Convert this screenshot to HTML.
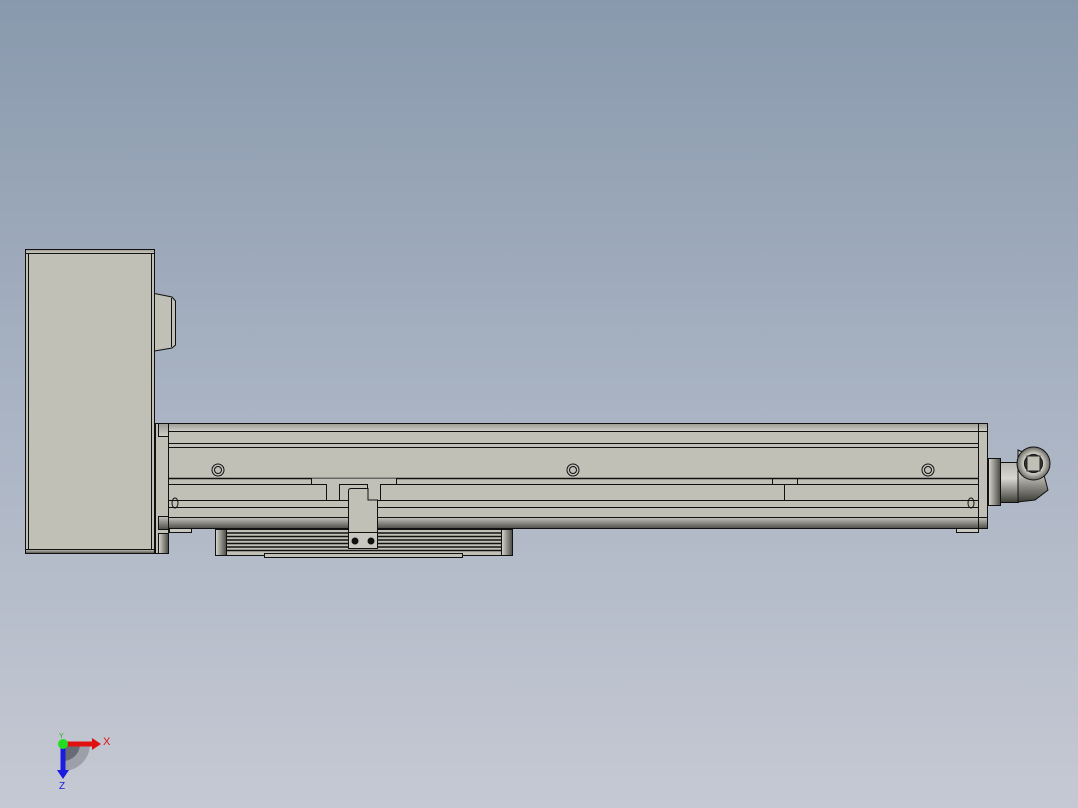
<!DOCTYPE html>
<html><head><style>
html,body{margin:0;padding:0;width:1078px;height:808px;overflow:hidden}
body{background:linear-gradient(#8999ad,#a9b3c3 50%,#c5c9d3);font-family:"Liberation Sans",sans-serif}
svg{position:absolute;left:0;top:0}
</style></head><body>
<svg width="1078" height="808" viewBox="0 0 1078 808">
<defs>
<linearGradient id="sh" x1="0" y1="0" x2="0" y2="1"><stop offset="0" stop-color="#c4c4bc"/><stop offset="1" stop-color="#4e4e48"/></linearGradient>
<linearGradient id="sh2" x1="0" y1="0" x2="0" y2="1"><stop offset="0" stop-color="#9a9a92"/><stop offset="1" stop-color="#d0d0c8"/></linearGradient>
<linearGradient id="hx" x1="0" y1="0" x2="1" y2="0"><stop offset="0" stop-color="#d8d8d0"/><stop offset="1" stop-color="#4a4a44"/></linearGradient>
<linearGradient id="el" x1="0" y1="0" x2="0" y2="1"><stop offset="0" stop-color="#b8b8b0"/><stop offset="0.4" stop-color="#d8d8d0"/><stop offset="1" stop-color="#3e3e38"/></linearGradient>
<radialGradient id="fit"><stop offset="0.5" stop-color="#3a3a36"/><stop offset="0.6" stop-color="#d0d0c8"/><stop offset="1" stop-color="#6a6a64"/></radialGradient>
</defs>
<g stroke="#111" stroke-width="1" fill="#c0c0b7">
<!-- motor -->
<rect x="25.5" y="249.5" width="129" height="304"/>
<rect x="25.5" y="249.5" width="129" height="4" fill="url(#sh2)"/>
<rect x="25.5" y="549.5" width="129" height="4" fill="url(#sh)"/>
<line x1="28.5" y1="253" x2="28.5" y2="549"/>
<line x1="151.5" y1="253" x2="151.5" y2="549"/>
<path d="M154.5 293.5 L172 297 L175.5 301 L175.5 345 L172 348 L154.5 351 Z"/>
<line x1="171.5" y1="298" x2="171.5" y2="347"/>
<!-- flange -->
<rect x="155.5" y="423.5" width="13" height="130" fill="#c0c0b7"/>
<rect x="158.5" y="423.5" width="10" height="13" fill="url(#sh2)"/>
<rect x="158.5" y="516.5" width="10" height="13" fill="url(#sh)"/>
<rect x="158.5" y="533.5" width="10" height="20" fill="url(#hx)"/>
<!-- body -->
<rect x="168.5" y="423.5" width="810" height="105"/>
<rect x="168.5" y="423.5" width="810" height="8" fill="url(#sh2)"/>
<rect x="168.5" y="517.5" width="810" height="11" fill="url(#sh)"/>
<line x1="168" y1="443.5" x2="978" y2="443.5"/>
<line x1="168" y1="447.5" x2="978" y2="447.5"/>
<line x1="168" y1="478.5" x2="978" y2="478.5" stroke-width="1.5"/>
<line x1="168" y1="484.5" x2="978" y2="484.5"/>
<line x1="168" y1="500.5" x2="978" y2="500.5"/>
<line x1="168" y1="507.5" x2="978" y2="507.5"/>
<!-- T slots -->
<path d="M311.5 478.5 V484.5 H326.5 V500.5 H339.5 V484.5 H367.5 V500.5 H380.5 V484.5 H396.5 V478.5" fill="#c0c0b7"/>
<path d="M772.5 478.5 V484.5 H784.5 V500.5 M797.5 484.5 V478.5" fill="none"/>
<line x1="784" y1="484.5" x2="797" y2="484.5"/>
<!-- end cap -->
<rect x="978.5" y="423.5" width="9" height="105" fill="#c0c0b7"/>
<rect x="978.5" y="423.5" width="9" height="8" fill="url(#sh2)"/>
<rect x="978.5" y="517.5" width="9" height="11" fill="url(#sh)"/>
<rect x="956.5" y="528.5" width="22" height="4" fill="#c8c8c0"/>
<rect x="169.5" y="528.5" width="22" height="4" fill="#c8c8c0"/>
<!-- fitting -->
<rect x="988.5" y="458.5" width="12" height="47" fill="url(#hx)"/>
<rect x="1000.5" y="462.5" width="18" height="40" fill="url(#el)"/>
<path d="M1018 450 L1040 460 L1048 490 L1035 500 L1018 502 Z" fill="url(#el)"/>
<circle cx="1033.5" cy="463.5" r="16.5" fill="url(#fit)"/>
<circle cx="1033.5" cy="463.5" r="9" fill="#3a3a36"/>
<rect x="1027" y="456" width="13" height="15" fill="#c0c0b7" stroke="#222"/>
<!-- scale strip -->
<rect x="215.5" y="529.5" width="297" height="26" fill="#c0c0b7"/>
<rect x="264.5" y="553.5" width="198" height="4" fill="#c0c0b7"/>
<rect x="215.5" y="529.5" width="11" height="26" fill="url(#hx)"/>
<rect x="501.5" y="529.5" width="11" height="26" fill="url(#hx)"/>
<g stroke="#111" stroke-width="1.6">
<line x1="226" y1="533" x2="502" y2="533"/><line x1="226" y1="536.5" x2="502" y2="536.5"/>
<line x1="226" y1="540" x2="502" y2="540"/><line x1="226" y1="543.5" x2="502" y2="543.5"/>
<line x1="226" y1="547" x2="502" y2="547"/><line x1="226" y1="550.5" x2="502" y2="550.5"/>
</g>
<!-- carriage tab -->
<path d="M348.5 548.5 V491 Q348.5 488.5 351 488.5 H368 V500 H377.5 V548.5 Z" fill="#c0c0b7"/>
<line x1="348" y1="532.5" x2="378" y2="532.5"/>
<rect x="349" y="533" width="28" height="15" fill="#c8c8c0" stroke="none"/>
<circle cx="355" cy="541" r="3" fill="#111"/><circle cx="371" cy="541" r="3" fill="#111"/>
<!-- bolts -->
<g fill="none">
<circle cx="218" cy="470" r="6"/><circle cx="218" cy="470" r="3.5"/>
<circle cx="573" cy="470" r="6"/><circle cx="573" cy="470" r="3.5"/>
<circle cx="928" cy="470" r="6"/><circle cx="928" cy="470" r="3.5"/>
<ellipse cx="175" cy="503" rx="3" ry="5"/><ellipse cx="971" cy="503" rx="3" ry="5"/>
</g>
</g>
<!-- triad -->
<path d="M63 744 L90 744 A27 27 0 0 1 63 771 Z" fill="#8d9099" opacity="0.7"/>
<path d="M63 744 L80 744 A17 17 0 0 1 63 761 Z" fill="#5b5e66" opacity="0.8"/>
<rect x="63" y="741.5" width="30" height="5" fill="#e01010"/>
<path d="M92 738 L101 744 L92 750 Z" fill="#e01010"/>
<rect x="60.5" y="744" width="5" height="28" fill="#1a1ae0"/>
<path d="M57 770 L63 779 L69 770 Z" fill="#1a1ae0"/>
<circle cx="63" cy="744" r="5" fill="#22dd22"/>
<text x="103" y="745" font-size="11" fill="#e01010" font-family="Liberation Sans">X</text>
<text x="59" y="789" font-size="10" fill="#1a1ae0" font-family="Liberation Sans">Z</text>
<text x="59" y="738" font-size="7" fill="#22aa22" font-family="Liberation Sans">Y</text>
</svg>
</body></html>
